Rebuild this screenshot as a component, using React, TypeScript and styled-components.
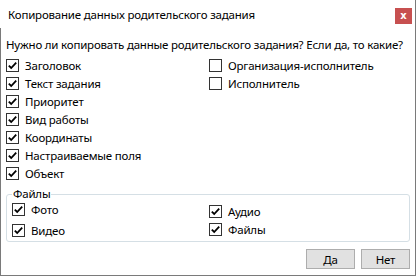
import React from "react";
import styled, { createGlobalStyle } from "styled-components";

const Global = createGlobalStyle`
  html, body { margin: 0; padding: 0; background: #ffffff; }
  body { font-family: "Noto Sans", "Open Sans", sans-serif; font-size: 11.5px; letter-spacing: -0.2px; color: #000; }
  * { box-sizing: border-box; }
`;

const Window = styled.div`
  width: 416px;
  height: 276px;
  display: flex;
  flex-direction: column;
  background: #fff;
`;

const TitleBar = styled.div`
  height: 28px;
  display: flex;
  align-items: center;
  padding-left: 8px;
  border-right: 1px solid #7a7a7a;
`;

const Title = styled.div`
  line-height: 15px;
  flex: 1;
  margin-top: 1px;
`;

const CloseButton = styled.div`
  width: 17px;
  height: 16px;
  margin-right: 3px;
  margin-top: 4px;
  background: #c75050;
  color: #fff;
  font-family: "DejaVu Sans", sans-serif;
  font-weight: bold;
  font-size: 10px;
  letter-spacing: 0;
  line-height: 15px;
  text-align: center;
`;

const Body = styled.div`
  flex: 1;
  display: flex;
  flex-direction: column;
  border: 1px solid #7a7a7a;
  border-top: none;
  padding: 9px 5px 6px 5px;
`;

const Question = styled.div`
  line-height: 15px;
  white-space: nowrap;
`;

const Columns = styled.div`
  display: grid;
  grid-template-columns: 203px 1fr;
  margin-top: 4px;
`;

const Column = styled.div`
  display: flex;
  flex-direction: column;
`;

const Row = styled.label<{ $h?: number; $shift?: number }>`
  display: flex;
  align-items: center;
  gap: 6px;
  height: ${(p) => p.$h ?? 18}px;
  margin-top: ${(p) => p.$shift ?? 0}px;
  line-height: 15px;
  white-space: nowrap;
`;

const Box = styled.span`
  width: 13px;
  height: 13px;
  flex: none;
  border: 1px solid #333;
  background: #fff;
  display: flex;
  align-items: center;
  justify-content: center;
`;

const Group = styled.fieldset`
  margin: 5px 0 0 0;
  padding: 0 0 0 5px;
  border: 1px solid #d5dfe5;
  border-radius: 3px;
  height: 55px;
`;

const Legend = styled.legend`
  padding: 0 1px;
  margin-left: 0;
  line-height: 14px;
`;

const GroupGrid = styled.div`
  display: grid;
  grid-template-columns: 197px 1fr;
  margin-top: -2px;
`;

const Footer = styled.div`
  margin-top: auto;
  display: flex;
  justify-content: flex-end;
  gap: 6px;
`;

const Button = styled.div`
  width: 49px;
  height: 20px;
  background: #e1e1e1;
  border: 1px solid #adadad;
  display: flex;
  align-items: center;
  justify-content: center;
  line-height: 15px;
`;

const Check = ({ checked }: { checked: boolean }) => (
  <Box>
    {checked && (
      <svg width="11" height="11" viewBox="0 0 11 11">
        <path d="M1.8 5.6 L4.2 8 L9.2 2.6" fill="none" stroke="#000" strokeWidth="1.8" />
      </svg>
    )}
  </Box>
);

const Item = ({ label, checked = true, h, shift }: { label: string; checked?: boolean; h?: number; shift?: number }) => (
  <Row $h={h} $shift={shift}>
    <Check checked={checked} />
    <span>{label}</span>
  </Row>
);

export default function App() {
  const left = ["Заголовок", "Текст задания", "Приоритет", "Вид работы", "Координаты", "Настраиваемые поля", "Объект"];
  return (
    <>
      <Global />
      <Window>
        <TitleBar>
          <Title>Копирование данных родительского задания</Title>
          <CloseButton>x</CloseButton>
        </TitleBar>
        <Body>
          <Question>Нужно ли копировать данные родительского задания? Если да, то какие?</Question>
          <Columns>
            <Column>
              {left.map((l) => (
                <Item key={l} label={l} />
              ))}
            </Column>
            <Column>
              <Item label="Организация-исполнитель" checked={false} />
              <Item label="Исполнитель" checked={false} />
            </Column>
          </Columns>
          <Group>
            <Legend>Файлы</Legend>
            <GroupGrid>
              <Column>
                <Item label="Фото" h={20} />
                <Item label="Видео" h={22} />
              </Column>
              <Column>
                <Item label="Аудио" h={18} shift={3} />
                <Item label="Файлы" h={18} shift={0} />
              </Column>
            </GroupGrid>
          </Group>
          <Footer>
            <Button>Да</Button>
            <Button>Нет</Button>
          </Footer>
        </Body>
      </Window>
    </>
  );
}
